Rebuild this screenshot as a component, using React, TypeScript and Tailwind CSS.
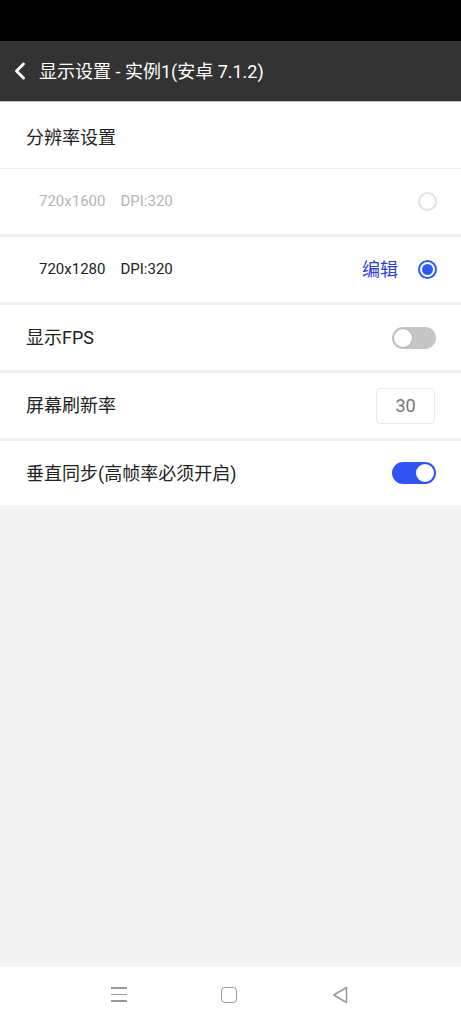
import { ChevronLeft } from 'lucide-react';

const font = { fontFamily: '"Roboto", "Noto Sans CJK SC", sans-serif' };

function Divider({ thick }: { thick?: boolean }) {
  return <div className={thick ? 'h-[3px] bg-[#f0f0f0]' : 'h-px bg-[#ececec]'} />;
}

function Toggle({ on }: { on: boolean }) {
  return (
    <div
      className={
        'w-[44px] h-[22px] rounded-full flex items-center px-[2px] ' +
        (on ? 'bg-[#3352f2] justify-end' : 'bg-[#c6c6c6] justify-start')
      }
    >
      <div
        className={
          'w-[18px] h-[18px] rounded-full bg-white ' + (on ? '' : 'shadow-[0_0_0_1px_#b8b8b8]')
        }
      />
    </div>
  );
}

function Radio({ checked }: { checked: boolean }) {
  return checked ? (
    <div className="w-[19px] h-[19px] rounded-full border-2 border-[#2f5bf0] flex items-center justify-center">
      <div className="w-[11px] h-[11px] rounded-full bg-[#2f5bf0]" />
    </div>
  ) : (
    <div className="w-[19px] h-[19px] rounded-full border-2 border-[#e2e2e2]" />
  );
}

export default function App() {
  return (
    <div className="w-[461px] h-[1024px] flex flex-col bg-[#f2f2f2]" style={font}>
      {/* status bar */}
      <div className="h-[41px] bg-black shrink-0" />

      {/* header */}
      <div className="h-[60px] bg-[#333333] flex items-center pl-[6px] shrink-0">
        <ChevronLeft className="w-[28px] h-[28px] text-white" strokeWidth={2.5} />
        <span className="ml-[5px] text-[18px] text-white">显示设置 - 实例1(安卓 7.1.2)</span>
      </div>
      <div className="h-px bg-[#bdbdbd] shrink-0" />

      <div className="bg-white">
        <div className="h-[66px] flex items-center pl-[26px] pt-[4px]">
          <span className="text-[18px] text-[#222]">分辨率设置</span>
        </div>
        <Divider />
        <div className="h-[65px] flex items-center pl-[39px] pr-[24px]">
          <span className="text-[15px] text-[#b4b4b4]">720x1600</span>
          <span className="ml-[15px] text-[15px] text-[#b4b4b4]">DPI:320</span>
          <div className="ml-auto">
            <Radio checked={false} />
          </div>
        </div>
        <Divider thick />
        <div className="h-[65px] flex items-center pl-[39px] pr-[24px]">
          <span className="text-[15px] text-[#222]">720x1280</span>
          <span className="ml-[15px] text-[15px] text-[#222]">DPI:320</span>
          <span className="ml-auto text-[18px] text-[#2b3fd6]">编辑</span>
          <div className="ml-[20px]">
            <Radio checked />
          </div>
        </div>
        <Divider thick />
        <div className="h-[65px] flex items-center pl-[26px] pr-[25px]">
          <span className="text-[18px] text-[#222]">显示FPS</span>
          <div className="ml-auto">
            <Toggle on={false} />
          </div>
        </div>
        <Divider thick />
        <div className="h-[65px] flex items-center pl-[26px] pr-[26px]">
          <span className="text-[18px] text-[#222]">屏幕刷新率</span>
          <div className="ml-auto w-[59px] h-[36px] rounded-[5px] border border-[#e8e8e8] flex items-center justify-center text-[18px] text-[#777]">
            30
          </div>
        </div>
        <Divider thick />
        <div className="h-[64px] flex items-center pl-[26px] pr-[25px]">
          <span className="text-[18px] text-[#222]">垂直同步(高帧率必须开启)</span>
          <div className="ml-auto">
            <Toggle on />
          </div>
        </div>
      </div>

      <div className="flex-1" />

      {/* nav bar */}
      <div className="h-[57px] bg-white flex items-center shrink-0 pb-[2px]">
        <div className="ml-[111px] w-[16px] flex flex-col gap-[5px]">
          <div className="h-[1.5px] bg-[#9a9a9a]" />
          <div className="h-[1.5px] bg-[#9a9a9a]" />
          <div className="h-[1.5px] bg-[#9a9a9a]" />
        </div>
        <div className="ml-[94px] w-[16px] h-[16px] rounded-[4px] border-[1.5px] border-[#9a9a9a]" />
        <svg className="ml-[95px]" width="16" height="18" viewBox="0 0 16 18" fill="none">
          <path d="M14.5 1.5 L1.8 9 L14.5 16.5 Z" stroke="#9a9a9a" strokeWidth="1.5" strokeLinejoin="round" />
        </svg>
      </div>
    </div>
  );
}
